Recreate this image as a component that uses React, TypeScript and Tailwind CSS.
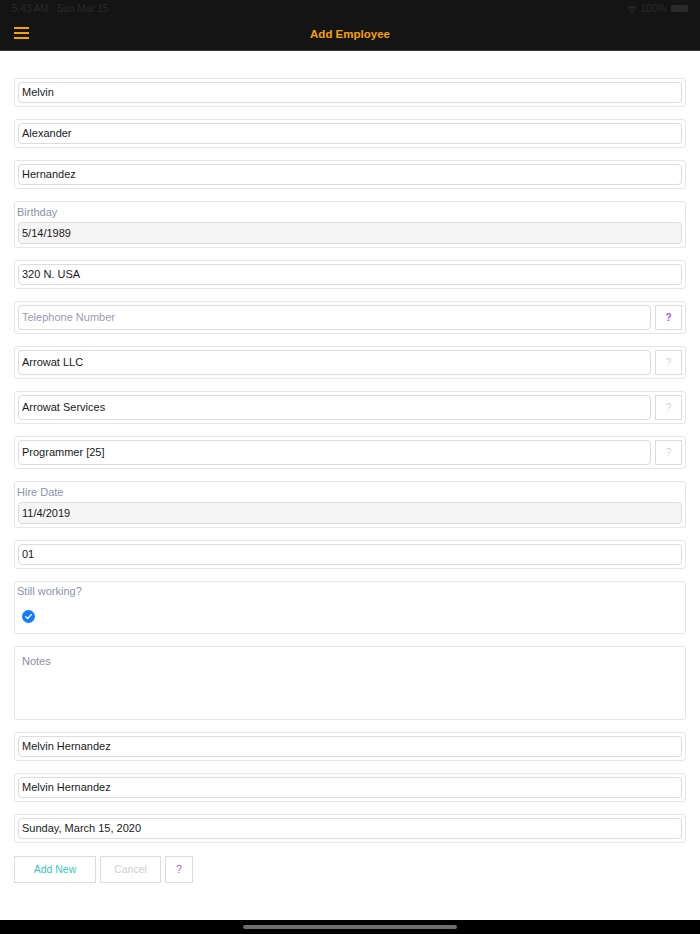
import React from 'react';

const font = { fontFamily: '"Liberation Sans", Arial, sans-serif' };

function TextRow({ value }: { value: string }) {
  return (
    <div className="h-[29px] rounded-[3px] border border-[#e6e6e6] p-[3px]">
      <div className="h-[21px] rounded-[4px] border border-[#dcdcdc] px-[3px] flex items-center text-[11px] text-[#1a1a1a]">
        {value}
      </div>
    </div>
  );
}

function DateRow({ label, value }: { label: string; value: string }) {
  return (
    <div className="h-[47px] rounded-[3px] border border-[#e6e6e6] px-[2px] pb-[3px] flex flex-col">
      <div className="h-[20px] flex items-center text-[11px] text-[#8a94a6]">{label}</div>
      <div className="flex-1 mx-[1px] rounded-[4px] border border-[#dcdcdc] bg-[#f5f5f5] px-[3px] flex items-center text-[11px] text-[#1a1a1a]">
        {value}
      </div>
    </div>
  );
}

function HelpRow({ value, placeholder, active }: { value?: string; placeholder?: string; active?: boolean }) {
  return (
    <div className="h-[33px] rounded-[3px] border border-[#e6e6e6] p-[3px] flex gap-[4px]">
      <div className="flex-1 rounded-[4px] border border-[#dcdcdc] px-[3px] flex items-center text-[11px]">
        {value ? <span className="text-[#1a1a1a]">{value}</span> : <span className="text-[#9a9cb0]">{placeholder}</span>}
      </div>
      <div
        className={
          active
            ? 'w-[27px] border border-[#dcdcdc] flex items-center justify-center text-[10px] font-bold text-[#a855f7]'
            : 'w-[27px] border border-[#dcdcdc] flex items-center justify-center text-[10px] text-[#d4d4d4]'
        }
      >
        ?
      </div>
    </div>
  );
}

export default function App() {
  return (
    <div className="w-[700px] h-[934px] flex flex-col bg-white" style={font}>
      <header className="h-[51px] bg-[#141414] border-b border-[#3a3a3a] flex flex-col">
        <div className="h-[17px] px-[12px] flex items-center justify-between text-[10px] text-[#2a2a2a]">
          <div className="flex gap-[8px]">
            <span>5:43 AM</span>
            <span>Sun Mar 15</span>
          </div>
          <div className="flex items-center gap-[3px]">
            <svg width="10" height="8" viewBox="0 0 10 8">
              <path d="M0.5 2.8 A6.5 6.5 0 0 1 9.5 2.8 L8.3 4 A4.8 4.8 0 0 0 1.7 4 Z" fill="#2a2a2a" />
              <path d="M2.6 4.9 A3.5 3.5 0 0 1 7.4 4.9 L6.3 6 A2 2 0 0 0 3.7 6 Z" fill="#2a2a2a" />
              <circle cx="5" cy="7.2" r="0.8" fill="#2a2a2a" />
            </svg>
            <span>100%</span>
            <div className="w-[17px] h-[7px] bg-[#2a2a2a] rounded-[1px] ml-[2px]" />
          </div>
        </div>
        <div className="flex-1 relative flex items-center justify-center px-[14px] pt-[2px]">
          <div className="absolute left-[14px] top-[10px] flex flex-col gap-[3px]">
            <div className="w-[15px] h-[2px] bg-[#f5a300]" />
            <div className="w-[15px] h-[2px] bg-[#f5a300]" />
            <div className="w-[15px] h-[2px] bg-[#f5a300]" />
          </div>
          <span className="text-[11.5px] font-bold text-[#f5a300]">Add Employee</span>
        </div>
      </header>

      <main className="flex-1 px-[14px] pt-[27px] flex flex-col">
        <div className="flex flex-col gap-[12px]">
          <TextRow value="Melvin" />
          <TextRow value="Alexander" />
          <TextRow value="Hernandez" />
          <DateRow label="Birthday" value="5/14/1989" />
          <TextRow value="320 N. USA" />
          <HelpRow placeholder="Telephone Number" active />
          <HelpRow value="Arrowat LLC" />
          <HelpRow value="Arrowat Services" />
          <HelpRow value="Programmer [25]" />
          <DateRow label="Hire Date" value="11/4/2019" />
          <TextRow value="01" />
          <div className="h-[53px] rounded-[3px] border border-[#e6e6e6] px-[2px] flex flex-col">
            <div className="h-[19px] flex items-center text-[11px] text-[#8a94a6]">Still working?</div>
            <div className="flex-1 flex items-center pl-[5px] pb-[2px]">
              <svg width="13" height="13" viewBox="0 0 13 13">
                <circle cx="6.5" cy="6.5" r="6.5" fill="#157efb" />
                <path d="M3.8 6.7 L5.7 8.5 L9.3 4.6" stroke="white" strokeWidth="1.3" fill="none" strokeLinecap="round" strokeLinejoin="round" />
              </svg>
            </div>
          </div>
          <div className="h-[74px] rounded-[3px] border border-[#e6e6e6] px-[7px] pt-[6px] text-[11px] text-[#8a8f99]">
            Notes
          </div>
          <TextRow value="Melvin Hernandez" />
          <TextRow value="Melvin Hernandez" />
          <TextRow value="Sunday, March 15, 2020" />
        </div>
        <div className="mt-[13px] flex gap-[4px]">
          <div className="w-[82px] h-[27px] border border-[#dcdcdc] flex items-center justify-center text-[10.5px] text-[#3cc5bd]">
            Add New
          </div>
          <div className="w-[61px] h-[27px] border border-[#dcdcdc] flex items-center justify-center text-[10.5px] text-[#cfcfcf]">
            Cancel
          </div>
          <div className="w-[28px] h-[27px] border border-[#dcdcdc] flex items-center justify-center text-[10.5px] text-[#a855f7]">
            ?
          </div>
        </div>
      </main>

      <footer className="h-[14px] bg-black flex justify-center pt-[5px]">
        <div className="w-[214px] h-[4px] rounded-full bg-[#6e6e6e]" />
      </footer>
    </div>
  );
}
